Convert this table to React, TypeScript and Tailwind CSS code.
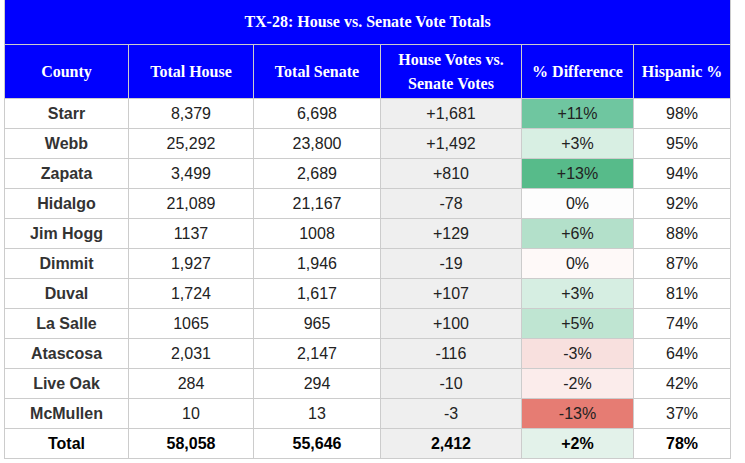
import React from "react";

type Row = { county: string; house: string; senate: string; diff: string; pct: string; pctBg: string; hisp: string };

const rows: Row[] = [
  { county: "Starr", house: "8,379", senate: "6,698", diff: "+1,681", pct: "+11%", pctBg: "bg-[#6fc6a0]", hisp: "98%" },
  { county: "Webb", house: "25,292", senate: "23,800", diff: "+1,492", pct: "+3%", pctBg: "bg-[#d8efe3]", hisp: "95%" },
  { county: "Zapata", house: "3,499", senate: "2,689", diff: "+810", pct: "+13%", pctBg: "bg-[#57bb8a]", hisp: "94%" },
  { county: "Hidalgo", house: "21,089", senate: "21,167", diff: "-78", pct: "0%", pctBg: "bg-[#fdfdfd]", hisp: "92%" },
  { county: "Jim Hogg", house: "1137", senate: "1008", diff: "+129", pct: "+6%", pctBg: "bg-[#b3e0ca]", hisp: "88%" },
  { county: "Dimmit", house: "1,927", senate: "1,946", diff: "-19", pct: "0%", pctBg: "bg-[#fef9f8]", hisp: "87%" },
  { county: "Duval", house: "1,724", senate: "1,617", diff: "+107", pct: "+3%", pctBg: "bg-[#d6eee2]", hisp: "81%" },
  { county: "La Salle", house: "1065", senate: "965", diff: "+100", pct: "+5%", pctBg: "bg-[#bfe5d2]", hisp: "74%" },
  { county: "Atascosa", house: "2,031", senate: "2,147", diff: "-116", pct: "-3%", pctBg: "bg-[#f8e0de]", hisp: "64%" },
  { county: "Live Oak", house: "284", senate: "294", diff: "-10", pct: "-2%", pctBg: "bg-[#fbeceb]", hisp: "42%" },
  { county: "McMullen", house: "10", senate: "13", diff: "-3", pct: "-13%", pctBg: "bg-[#e67c73]", hisp: "37%" },
];

const widths = ["w-[124px]", "w-[125px]", "w-[127px]", "w-[141px]", "w-[112px]", "w-[97px]"];

const cellBase = "flex items-center justify-center border-r border-b border-[#cccccc] shrink-0";

function DataRow({ r, total }: { r: Row; total?: boolean }) {
  const w = total ? "font-bold text-black" : "text-[#222222]";
  return (
    <div className="flex h-[30px]">
      <div className={`${cellBase} ${widths[0]} font-bold ${total ? "text-black" : "text-[#333333]"}`}>{r.county}</div>
      <div className={`${cellBase} ${widths[1]} ${w}`}>{r.house}</div>
      <div className={`${cellBase} ${widths[2]} ${w}`}>{r.senate}</div>
      <div className={`${cellBase} ${widths[3]} ${w} bg-[#efefef]`}>{r.diff}</div>
      <div className={`${cellBase} ${widths[4]} ${w} ${r.pctBg}`}>{r.pct}</div>
      <div className={`${cellBase} ${widths[5]} ${w}`}>{r.hisp}</div>
    </div>
  );
}

export default function App() {
  const serif = "font-['Liberation_Serif','Times_New_Roman',serif]";
  return (
    <div className="bg-white w-[745px] h-[463px] pl-[4px] font-['Liberation_Sans',Arial,sans-serif] text-[16px]">
      <div className="w-[727px] border-l border-[#cccccc]">
        <div className={`h-[45px] border-r border-b border-[#cccccc] bg-[#0000ff] text-white font-bold text-[16px] flex items-center justify-center ${serif}`}>
          TX-28: House vs. Senate Vote Totals
        </div>
        <div className={`flex h-[54px] bg-[#0000ff] text-white font-bold text-[16px] ${serif}`}>
          <div className={`${cellBase} ${widths[0]}`}>County</div>
          <div className={`${cellBase} ${widths[1]}`}>Total House</div>
          <div className={`${cellBase} ${widths[2]}`}>Total Senate</div>
          <div className={`${cellBase} ${widths[3]} flex-col leading-[24px] text-center`}>
            <span>House Votes vs.</span>
            <span>Senate Votes</span>
          </div>
          <div className={`${cellBase} ${widths[4]}`}>% Difference</div>
          <div className={`${cellBase} ${widths[5]}`}>Hispanic %</div>
        </div>
        {rows.map((r) => (
          <DataRow key={r.county} r={r} />
        ))}
        <DataRow
          total
          r={{ county: "Total", house: "58,058", senate: "55,646", diff: "2,412", pct: "+2%", pctBg: "bg-[#e3f2ea]", hisp: "78%" }}
        />
      </div>
    </div>
  );
}
